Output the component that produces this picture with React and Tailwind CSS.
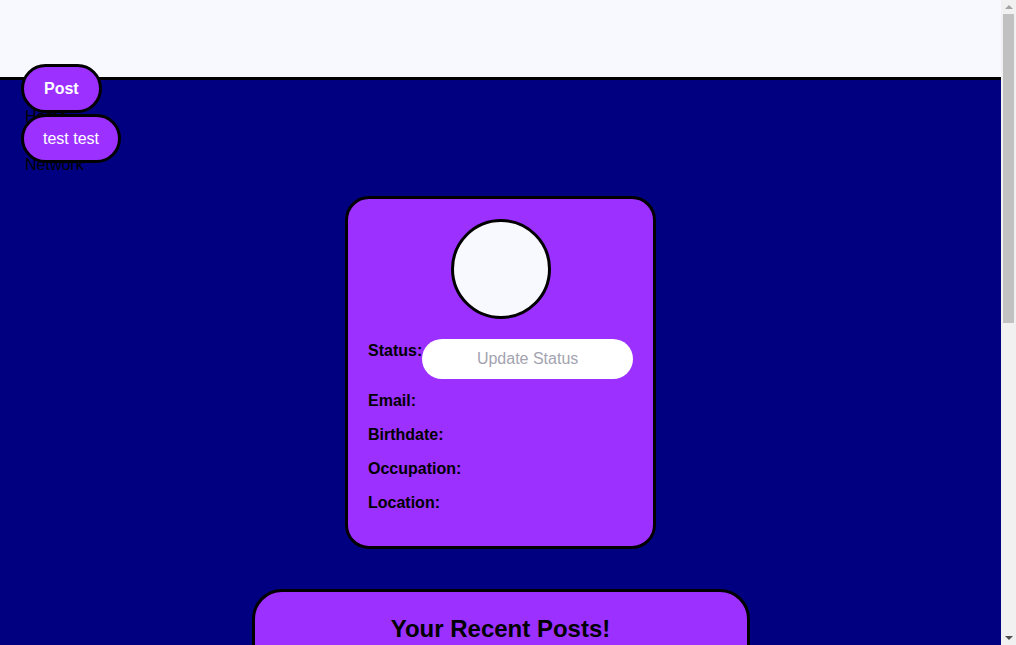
const rows = ['Email:', 'Birthdate:', 'Occupation:', 'Location:']

const Scrollbar = () => (
  <div className="flex w-[15px] shrink-0 flex-col bg-[#f1f1f1]">
    <div className="flex h-[14px] items-center justify-center">
      <div className="h-0 w-0 border-x-[4px] border-b-[4px] border-x-transparent border-b-[#a3a3a3]" />
    </div>
    <div className="mx-[2px] h-[309px] bg-[#c1c1c1]" />
    <div className="flex-1" />
    <div className="flex h-[14px] items-center justify-center">
      <div className="h-0 w-0 border-x-[4px] border-t-[4px] border-x-transparent border-t-[#505050]" />
    </div>
  </div>
)

const App = () => {
  return (
    <div className="flex h-screen overflow-hidden bg-[#000080] font-['Liberation_Sans',Arial,sans-serif] text-base text-black">
      <div className="min-w-0 flex-1">
        <header className="h-[80px] border-b-[3px] border-black bg-[#f8f8ff]" />

        <nav className="relative ml-[25px] flex flex-col gap-[30px] pt-[28px] leading-[18px]">
          <span>Home</span>
          <span>Network</span>

          <button className="absolute left-[-4px] top-[-16px] flex h-[49px] items-center rounded-full border-[3px] border-black bg-[#9b30ff] px-[20px] font-bold leading-[18px] text-white">
            Post
          </button>
          <button className="absolute left-[-4px] top-[34px] flex h-[49px] items-center rounded-full border-[3px] border-black bg-[#9b30ff] px-[19px] leading-[18px] text-white">
            test test
          </button>
        </nav>

        <main className="flex flex-col items-center pb-[40px] pt-[22px]">
          <section className="w-[311px] rounded-[24px] border-[3px] border-black bg-[#9b30ff] px-[20px] pb-[34px] pt-[20px]">
            <div className="mx-auto h-[100px] w-[100px] rounded-full border-[3px] border-black bg-[#f8f8ff]" />

            <div className="mt-[20px] flex items-start">
              <span className="mt-[3px] font-bold leading-[18px]">Status:</span>
              <input
                placeholder="Update Status"
                className="h-[40px] min-w-0 flex-1 rounded-full bg-white text-center text-base text-black outline-none placeholder:text-[#a3a3b0]"
              />
            </div>

            <div className="mt-[13px] flex flex-col gap-[16px]">
              {rows.map(label => (
                <p key={label} className="font-bold leading-[18px]">{label}</p>
              ))}
            </div>
          </section>

          <section className="mt-[40px] min-h-[660px] w-[498px] rounded-[30px] border-[3px] border-black bg-[#9b30ff] pt-[23px]">
            <h2 className="text-center text-2xl font-bold leading-[28px]">Your Recent Posts!</h2>
          </section>
        </main>
      </div>
      <Scrollbar />
    </div>
  )
}

export default App
